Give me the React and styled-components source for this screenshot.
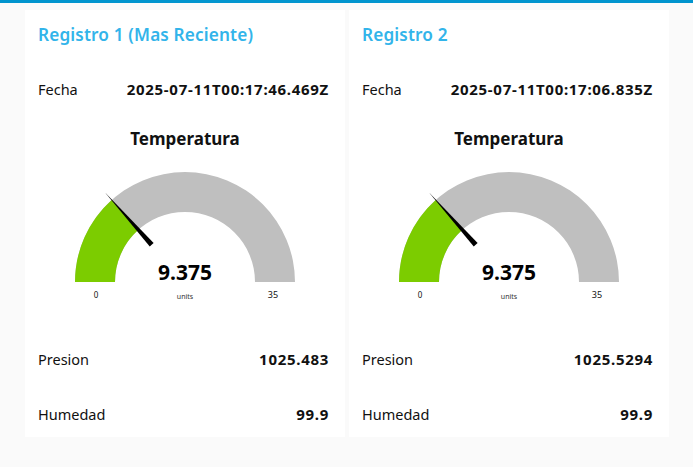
import React from 'react';
import styled, { createGlobalStyle } from 'styled-components';

const GlobalStyle = createGlobalStyle`
  html, body {
    margin: 0;
    padding: 0;
    background: #fafafa;
    font-family: "Noto Sans", "Open Sans", sans-serif;
    color: #111;
  }
`;

const TopBar = styled.div`
  height: 3px;
  background: #0094ce;
`;

const Board = styled.div`
  display: flex;
  gap: 4px;
  padding: 7px 0 0 25px;
`;

const Card = styled.div`
  width: 320px;
  height: 427px;
  background: #fff;
  display: flex;
  flex-direction: column;
  padding: 0 16px 0 13px;
  box-sizing: border-box;
`;

const Title = styled.div`
  height: 48px;
  margin-bottom: 2px;
  display: flex;
  align-items: center;
  font-size: 17.2px;
  font-weight: 600;
  letter-spacing: 0.15px;
  color: #32b4ea;
`;

const Row = styled.div`
  height: ${(p) => p.h || 54}px;
  padding-top: ${(p) => p.pt || 0}px;
  box-sizing: border-box;
  display: flex;
  align-items: center;
  justify-content: space-between;
  font-size: 14.5px;
`;

const Label = styled.span`
  font-weight: 400;
`;

const Value = styled.span`
  font-weight: 700;
  font-size: 15px;
  letter-spacing: 0.7px;
`;

const GaugeBox = styled.div`
  height: 214px;
  margin: 0 -16px 0 -13px;
  display: flex;
  flex-direction: column;
  align-items: center;
`;

const GaugeTitle = styled.div`
  height: 40px;
  display: flex;
  align-items: center;
  font-size: 17px;
  font-weight: 700;
`;

const Gauge = ({ value, min = 0, max = 35 }) => {
  const cx = 160;
  const cy = 124;
  const ro = 110;
  const ri = 70;
  const frac = (value - min) / (max - min);
  const a = Math.PI - frac * Math.PI;
  const px = (r, ang) => cx + r * Math.cos(ang);
  const py = (r, ang) => cy - r * Math.sin(ang);
  const arc = (a0, a1, color) => {
    const d = `M ${px(ro, a0)} ${py(ro, a0)} A ${ro} ${ro} 0 0 1 ${px(ro, a1)} ${py(ro, a1)} L ${px(ri, a1)} ${py(ri, a1)} A ${ri} ${ri} 0 0 0 ${px(ri, a0)} ${py(ri, a0)} Z`;
    return <path d={d} fill={color} />;
  };
  // needle: thin tip, wider base
  const perp = a + Math.PI / 2;
  const tip = [px(120, a), py(120, a)];
  const bx = px(50, a);
  const by = py(50, a);
  const w = 2.6;
  const b1 = [bx + w * Math.cos(perp), by - w * Math.sin(perp)];
  const b2 = [bx - w * Math.cos(perp), by + w * Math.sin(perp)];
  return (
    <svg width="320" height="174" viewBox="0 0 320 174">
      {arc(Math.PI, 0, '#bfbfbf')}
      {arc(Math.PI, a, '#7ccc00')}
      <polygon points={`${tip.join(',')} ${b1.join(',')} ${b2.join(',')}`} fill="#000" />
      <text x={cx} y={122} textAnchor="middle" fontSize="21" fontWeight="700" fill="#010101" fontFamily="Noto Sans, sans-serif">
        {value}
      </text>
      <text x={cx} y={141} textAnchor="middle" fontSize="7" fill="#333" fontFamily="Noto Sans, sans-serif">
        units
      </text>
      <text x={71} y={140} textAnchor="middle" fontSize="8" fill="#111" fontFamily="Noto Sans, sans-serif">
        {min}
      </text>
      <text x={248} y={140} textAnchor="middle" fontSize="9" fill="#111" fontFamily="Noto Sans, sans-serif">
        {max}
      </text>
    </svg>
  );
};

const records = [
  { title: 'Registro 1 (Mas Reciente)', fecha: '2025-07-11T00:17:46.469Z', temp: 9.375, presion: '1025.483', humedad: '99.9' },
  { title: 'Registro 2', fecha: '2025-07-11T00:17:06.835Z', temp: 9.375, presion: '1025.5294', humedad: '99.9' },
];

export default function App() {
  return (
    <>
      <GlobalStyle />
      <TopBar />
      <Board>
        {records.map((r) => (
          <Card key={r.title}>
            <Title>{r.title}</Title>
            <Row h={58}>
              <Label>Fecha</Label>
              <Value>{r.fecha}</Value>
            </Row>
            <GaugeBox>
              <GaugeTitle>Temperatura</GaugeTitle>
              <Gauge value={r.temp} />
            </GaugeBox>
            <Row>
              <Label>Presion</Label>
              <Value>{r.presion}</Value>
            </Row>
            <Row h={51} pt={4}>
              <Label>Humedad</Label>
              <Value>{r.humedad}</Value>
            </Row>
          </Card>
        ))}
      </Board>
    </>
  );
}
